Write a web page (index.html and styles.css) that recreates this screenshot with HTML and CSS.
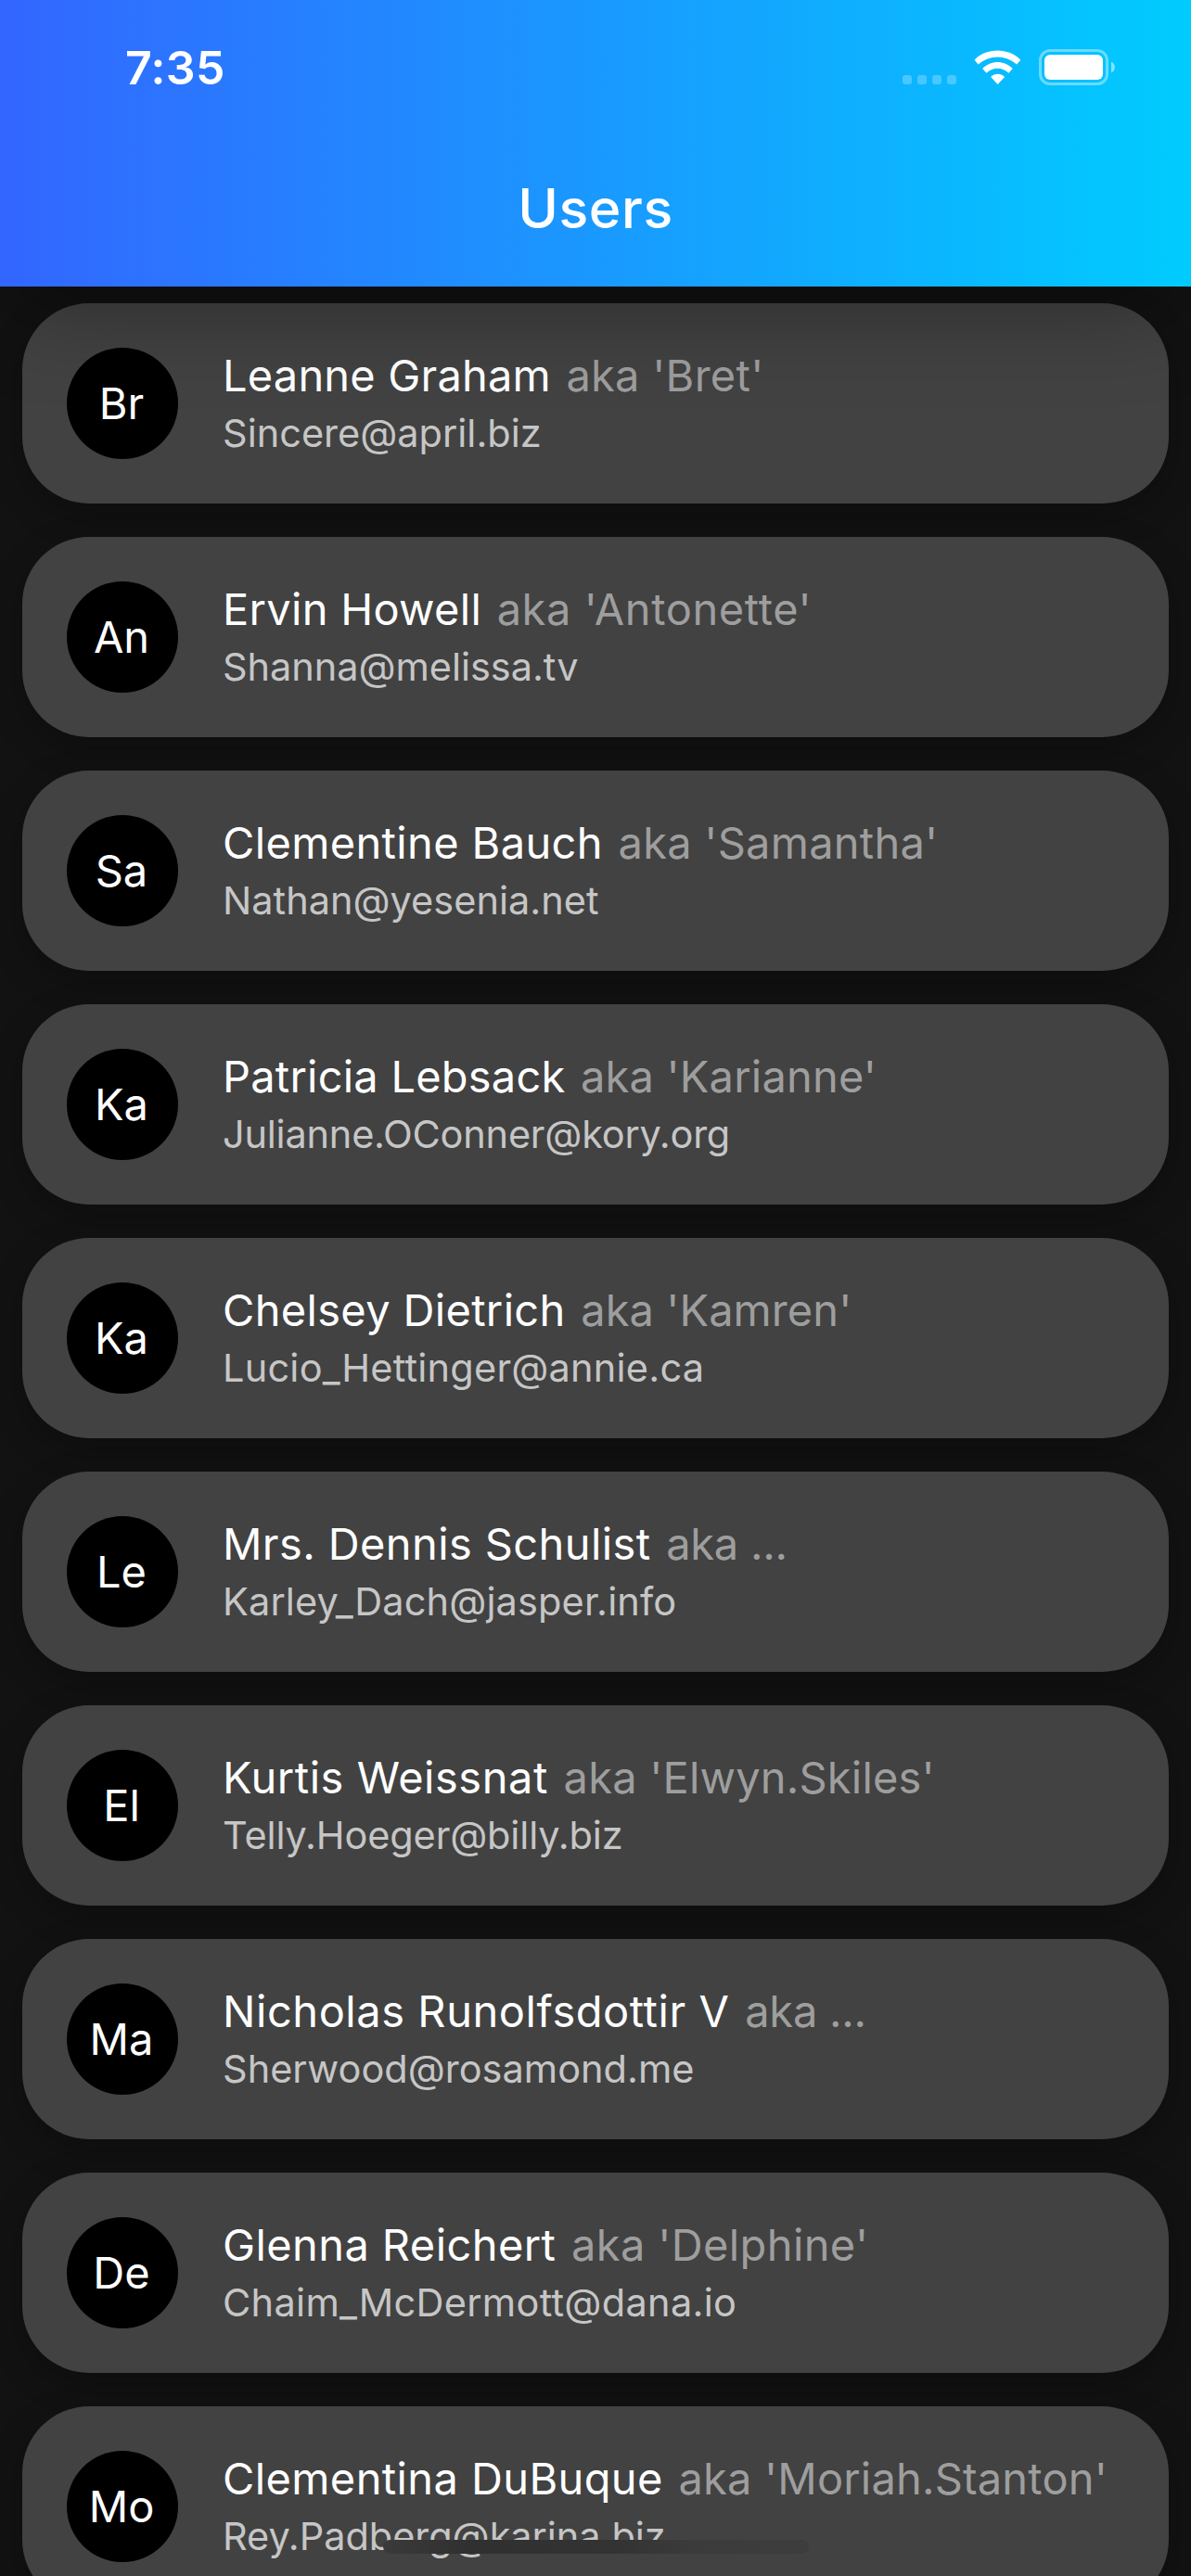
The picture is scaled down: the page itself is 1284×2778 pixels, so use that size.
FILE: index.html
```html
<!DOCTYPE html>
<html lang="en">
<head>
<meta charset="utf-8">
<title>Users</title>
<link rel="stylesheet" href="styles.css">
</head>
<body>
<header class="app-bar">
  <div class="status">
    <span class="time">7:35</span>
    <svg class="status-icons" width="230" height="42" viewBox="0 0 230 42">
      <g fill="#fff" fill-opacity=".25"><rect x="1" y="28" width="10" height="10" rx="3"/><rect x="17" y="28" width="10" height="10" rx="3"/><rect x="33" y="28" width="10" height="10" rx="3"/><rect x="49" y="28" width="10" height="10" rx="3"/></g>
      <g fill="#fff"><path d="M78.600 11.700C90.400 -1.900 116.300 -1.900 128.300 11.700L124.100 16.600C112.300 5.700 94.600 5.700 82.700 16.600Z"/><path d="M87.200 20.900C96.200 11.600 110.700 11.600 119.700 20.900L115.400 25.800C108.200 19.200 98.600 19.200 91.500 25.800Z"/><path d="M96.200 30C100.700 25.700 106.500 25.700 111.100 30L103.600 38Z"/></g>
      <rect x="149.500" y="1.500" width="72" height="36" rx="10.500" fill="none" stroke="#fff" stroke-opacity=".4" stroke-width="3"/>
      <rect x="154" y="6" width="63" height="27" rx="6" fill="#fff"/>
      <path d="M226 13.500C231.300 16 231.300 23 226 25.500Z" fill="#fff" fill-opacity=".5"/>
    </svg>
  </div>
  <h1 class="title">Users</h1>
</header>
<main class="list">
  <article class="card"><div class="avatar">Br</div><div class="info"><p class="name">Leanne Graham <span class="aka">aka 'Bret'</span></p><p class="email">Sincere@april.biz</p></div></article>
  <article class="card"><div class="avatar">An</div><div class="info"><p class="name">Ervin Howell <span class="aka">aka 'Antonette'</span></p><p class="email">Shanna@melissa.tv</p></div></article>
  <article class="card"><div class="avatar">Sa</div><div class="info"><p class="name">Clementine Bauch <span class="aka">aka 'Samantha'</span></p><p class="email">Nathan@yesenia.net</p></div></article>
  <article class="card"><div class="avatar">Ka</div><div class="info"><p class="name">Patricia Lebsack <span class="aka">aka 'Karianne'</span></p><p class="email">Julianne.OConner@kory.org</p></div></article>
  <article class="card"><div class="avatar">Ka</div><div class="info"><p class="name">Chelsey Dietrich <span class="aka">aka 'Kamren'</span></p><p class="email">Lucio_Hettinger@annie.ca</p></div></article>
  <article class="card"><div class="avatar">Le</div><div class="info"><p class="name">Mrs. Dennis Schulist <span class="aka">aka ...</span></p><p class="email">Karley_Dach@jasper.info</p></div></article>
  <article class="card"><div class="avatar">El</div><div class="info"><p class="name">Kurtis Weissnat <span class="aka">aka 'Elwyn.Skiles'</span></p><p class="email">Telly.Hoeger@billy.biz</p></div></article>
  <article class="card"><div class="avatar">Ma</div><div class="info"><p class="name">Nicholas Runolfsdottir V <span class="aka">aka ...</span></p><p class="email">Sherwood@rosamond.me</p></div></article>
  <article class="card"><div class="avatar">De</div><div class="info"><p class="name">Glenna Reichert <span class="aka">aka 'Delphine'</span></p><p class="email">Chaim_McDermott@dana.io</p></div></article>
  <article class="card"><div class="avatar">Mo</div><div class="info"><p class="name">Clementina DuBuque <span class="aka">aka 'Moriah.Stanton'</span></p><p class="email">Rey.Padberg@karina.biz</p></div></article>
</main>
<div class="home-indicator"></div>
</body>
</html>
```
FILE: styles.css
```css
* { box-sizing: border-box; margin: 0; padding: 0; }

body {
  position: relative;
  height: 2778px;
  overflow: hidden;
  background: #121212;
  color: #fff;
  font-family: Inter, "Liberation Sans", sans-serif;
}

.app-bar {
  position: relative;
  z-index: 1;
  height: 309px;
  background: linear-gradient(90deg, #36f, #0cf);
  box-shadow: 0 40px 100px -20px rgba(0, 0, 0, .36);
}

.status {
  display: flex;
  justify-content: space-between;
  height: 141px;
  padding: 53px 82px 0 135px;
}

.time {
  height: 42px;
  font-size: 50px;
  line-height: 40px;
  font-weight: 560;
  letter-spacing: .4px;
}

.title {
  font-size: 59px;
  line-height: 168px;
  font-weight: 500;
  letter-spacing: .6px;
  text-align: center;
}

.list {
  display: flex;
  flex-direction: column;
  gap: 36px;
  padding: 18px 24px;
}

.card {
  display: flex;
  flex: none;
  align-items: center;
  gap: 48px;
  height: 216px;
  padding: 0 48px;
  border-radius: 72px;
  background: #424242;
  box-shadow: 0 12px 36px rgba(0, 0, 0, .25);
}

.avatar {
  width: 120px;
  height: 120px;
  padding-right: 2px;
  border-radius: 50%;
  background: #000;
  font-size: 47px;
  line-height: 120px;
  text-align: center;
}

.name {
  font-size: 47px;
  line-height: 64px;
  letter-spacing: var(--name-track);
  white-space: nowrap;
}

.aka {
  margin-left: 3px;
  color: #9e9e9e;
  letter-spacing: var(--aka-track);
}

.email {
  color: #c6c6c6;
  font-size: 41.500px;
  line-height: 60px;
  letter-spacing: var(--email-track);
}

.card:nth-child(1) { --name-track: .19px; --aka-track: .27px; --email-track: 0px; }
.card:nth-child(2) { --name-track: .3px; --aka-track: .6px; --email-track: -.05px; }
.card:nth-child(3) { --name-track: .36px; --aka-track: .25px; --email-track: 0px; }
.card:nth-child(4) { --name-track: .22px; --aka-track: .19px; --email-track: -.22px; }
.card:nth-child(5) { --name-track: .33px; --aka-track: .08px; --email-track: .22px; }
.card:nth-child(6) { --name-track: .4px; --aka-track: -.25px; --email-track: .13px; }
.card:nth-child(7) { --name-track: .53px; --aka-track: .2px; --email-track: -.13px; }
.card:nth-child(8) { --name-track: .55px; --aka-track: -.25px; --email-track: 0px; }
.card:nth-child(9) { --name-track: .41px; --aka-track: .38px; --email-track: .3px; }
.card:nth-child(10) { --name-track: .39px; --aka-track: .18px; --email-track: -.05px; }

.home-indicator {
  position: absolute;
  z-index: 2;
  left: 413px;
  top: 2739px;
  width: 459px;
  height: 15px;
  border-radius: 8px;
  background: linear-gradient(90deg, #3a3a3a, #303030 20%, #333 55%, #3b3b3b 72%, #3d3d3d);
}
```
